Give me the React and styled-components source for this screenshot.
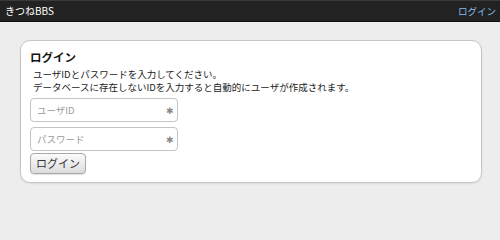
import React from 'react'
import styled, { createGlobalStyle } from 'styled-components'

const GlobalStyle = createGlobalStyle`
  html, body {
    margin: 0;
    padding: 0;
    background: #ededed;
  }
  body {
    font-family: "Noto Sans CJK JP", "Noto Sans", sans-serif;
    color: #222;
  }
`

const Header = styled.header`
  display: flex;
  align-items: center;
  justify-content: space-between;
  box-sizing: border-box;
  height: 22px;
  padding: 0 4px 0 5px;
  background: #222;
  border-top: 1px solid #3a3a3a;
  border-bottom: 1px solid #111;
`

const Brand = styled.span`
  color: #fff;
  font-size: 10px;
  line-height: 20px;
`

const NavLink = styled.a`
  color: #86bdec;
  font-size: 9.5px;
  line-height: 20px;
  text-decoration: none;
`

const Main = styled.main`
  padding: 18px 18px 20px 20px;
`

const Card = styled.section`
  background: #fff;
  border: 1px solid #c6c6c6;
  border-radius: 10px;
  box-shadow: 0 1px 2px rgba(0, 0, 0, 0.08);
  padding: 9px 10px 8px 9px;
`

const Title = styled.h1`
  margin: 0 0 4px;
  font-size: 11.5px;
  font-weight: 700;
  line-height: 14px;
  color: #111;
`

const Lead = styled.p`
  margin: 0 0 5px 3px;
  font-size: 9.5px;
  line-height: 12.5px;
  color: #1a1a1a;
`

const LeadLine = styled.span`
  display: block;
`

const Form = styled.form`
  display: flex;
  flex-direction: column;
  align-items: flex-start;
`

const Field = styled.label`
  position: relative;
  display: block;
  width: 148px;
  margin-bottom: ${(p) => p.$gap}px;
`

const Input = styled.input`
  display: block;
  box-sizing: border-box;
  width: 100%;
  height: 24px;
  padding: 0 14px 0 6px;
  border: 1px solid #c4c4c4;
  border-radius: 4px;
  background: #fff;
  font-family: inherit;
  font-size: 9.5px;
  outline: none;
  &::placeholder {
    color: #9a9a9a;
  }
`

const Required = styled.span`
  position: absolute;
  right: 4px;
  top: 50%;
  transform: translateY(-45%);
  color: #8a8a8a;
  font-size: 9px;
  line-height: 9px;
`

const Button = styled.button`
  box-sizing: border-box;
  height: 21px;
  padding: 0 5px;
  border: 1px solid #a8a8a8;
  border-radius: 4px;
  background: linear-gradient(#fbfbfb, #dcdcdc);
  box-shadow: 0 1px 1px rgba(0, 0, 0, 0.12);
  font-family: inherit;
  font-size: 11px;
  line-height: 19px;
  color: #333;
`

export default function App() {
  return (
    <>
      <GlobalStyle />
      <Header>
        <Brand>きつねBBS</Brand>
        <NavLink href="#">ログイン</NavLink>
      </Header>
      <Main>
        <Card>
          <Title>ログイン</Title>
          <Lead>
            <LeadLine>ユーザIDとパスワードを入力してください。</LeadLine>
            <LeadLine>データベースに存在しないIDを入力すると自動的にユーザが作成されます。</LeadLine>
          </Lead>
          <Form onSubmit={(e) => e.preventDefault()}>
            <Field $gap={5}>
              <Input placeholder="ユーザID" />
              <Required>✱</Required>
            </Field>
            <Field $gap={2}>
              <Input type="password" placeholder="パスワード" />
              <Required>✱</Required>
            </Field>
            <Button type="submit">ログイン</Button>
          </Form>
        </Card>
      </Main>
    </>
  )
}
